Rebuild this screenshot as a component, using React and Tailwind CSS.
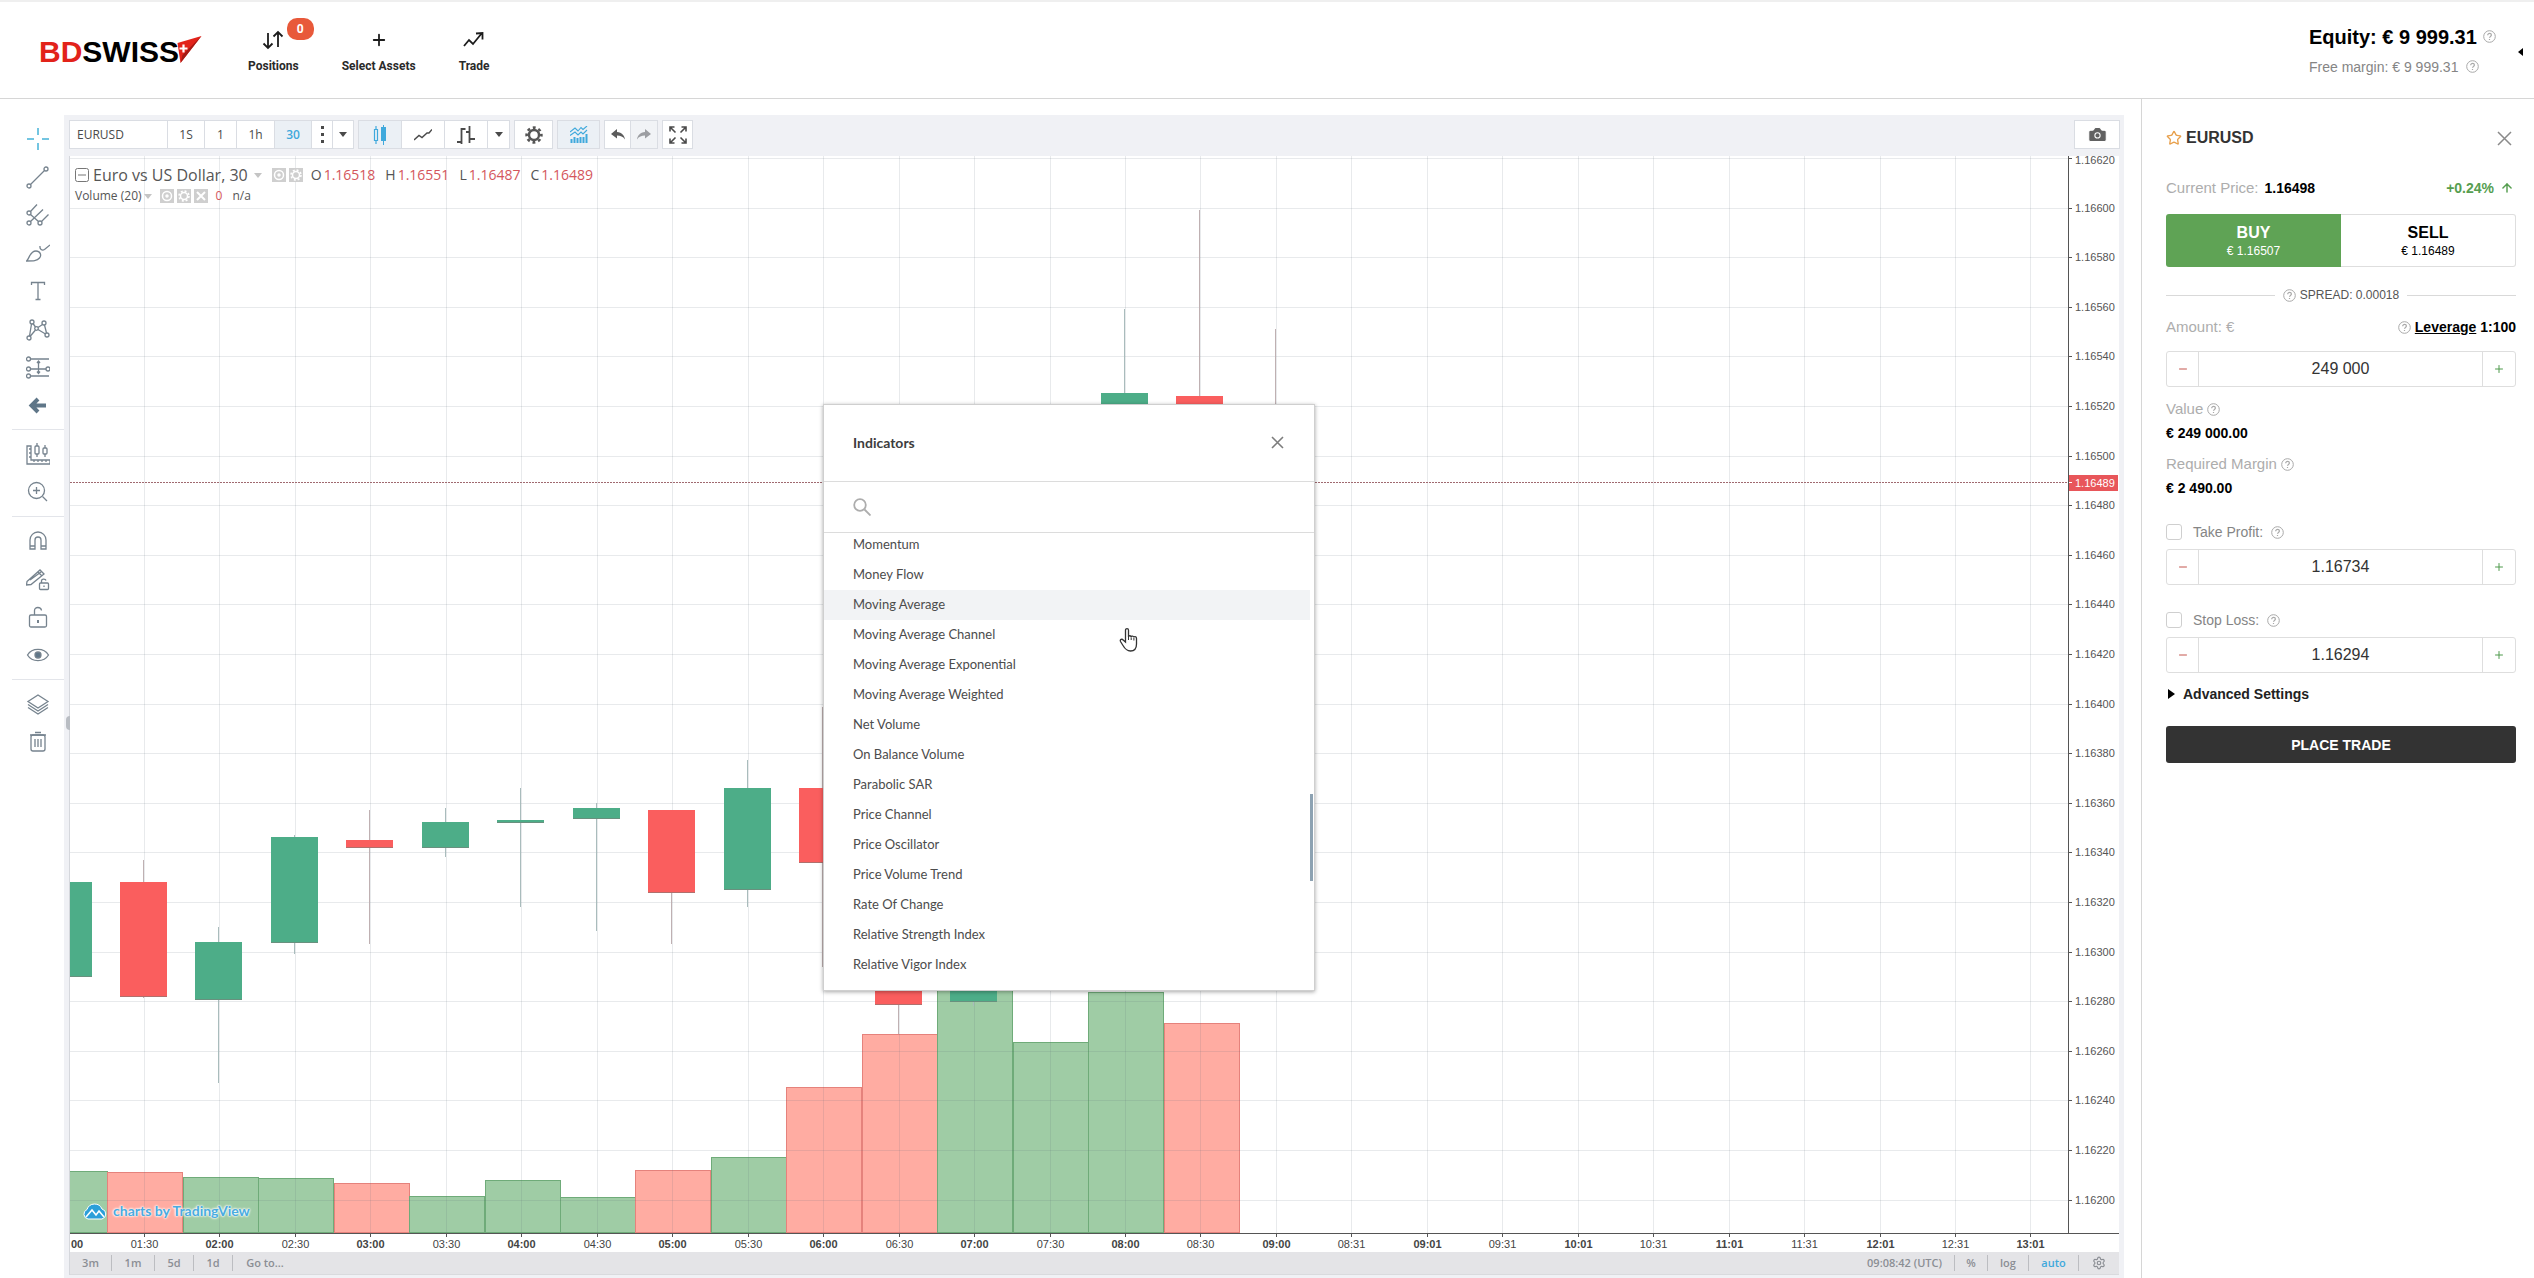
import React from 'react';
import { Plus, Minus, Star, Camera, Settings, ArrowUp } from 'lucide-react';
import clsx from 'clsx';

const STEP = 75.46;
const FIRST_X = 74;
const TOP_PRICE = 1.1662;
const PX_PER_TICK = 49.6;

const xAt = (i) => Math.round(FIRST_X + i * STEP) + 0.5;
const yAt = (price) => Math.round(2 + ((TOP_PRICE - price) / 0.0002) * PX_PER_TICK) + 0.5;

const TIMES = [
  '00', '01:30', '02:00', '02:30', '03:00', '03:30', '04:00', '04:30', '05:00',
  '05:30', '06:00', '06:30', '07:00', '07:30', '08:00', '08:30', '09:00', '08:31',
  '09:01', '09:31', '10:01', '10:31', '11:01', '11:31', '12:01', '12:31', '13:01',
];

const PRICES = Array.from({ length: 22 }, (_, i) => TOP_PRICE - i * 0.0002);

// i: slot, then body top/bottom and wick top/bottom in plot pixels
const CANDLES = [
  { i: -1, up: true, top: 726, bottom: 821, high: 726, low: 821 },
  { i: 0, up: false, top: 726, bottom: 841, high: 704, low: 842 },
  { i: 1, up: true, top: 786, bottom: 844, high: 771, low: 927 },
  { i: 2, up: true, top: 681, bottom: 787, high: 679, low: 798 },
  { i: 3, up: false, top: 684, bottom: 692, high: 654, low: 788 },
  { i: 4, up: true, top: 666, bottom: 692, high: 652, low: 701 },
  { i: 5, up: true, top: 664, bottom: 667, high: 632, low: 751 },
  { i: 6, up: true, top: 652, bottom: 663, high: 647, low: 775 },
  { i: 7, up: false, top: 654, bottom: 737, high: 654, low: 788 },
  { i: 8, up: true, top: 632, bottom: 734, high: 604, low: 751 },
  { i: 9, up: false, top: 632, bottom: 707, high: 551, low: 811 },
  { i: 10, up: false, top: 740, bottom: 849, high: 720, low: 878 },
  { i: 11, up: true, top: 560, bottom: 846, high: 540, low: 850 },
  { i: 13, up: true, top: 237, bottom: 420, high: 153, low: 440 },
  { i: 14, up: false, top: 240, bottom: 330, high: 54, low: 380 },
  { i: 15, up: false, top: 300, bottom: 327, high: 173, low: 340 },
];

const VOLUMES = [
  [-1, 1015, true], [0, 1016, false], [1, 1021, true], [2, 1022, true], [3, 1027, false],
  [4, 1040, true], [5, 1024, true], [6, 1041, true], [7, 1014, false], [8, 1001, true],
  [9, 931, false], [10, 878, false], [11, 832, true], [12, 886, true], [13, 836, true],
  [14, 867, false],
];

const INDICATORS = [
  'Momentum', 'Money Flow', 'Moving Average', 'Moving Average Channel',
  'Moving Average Exponential', 'Moving Average Weighted', 'Net Volume', 'On Balance Volume',
  'Parabolic SAR', 'Price Channel', 'Price Oscillator', 'Price Volume Trend',
  'Rate Of Change', 'Relative Strength Index', 'Relative Vigor Index',
];

function Caret({ className }) {
  return (
    <svg className={className} width="8" height="5" viewBox="0 0 8 5" aria-hidden="true">
      <path d="M0 0h8L4 5z" fill="currentColor" />
    </svg>
  );
}

function Gear({ size, className }) {
  return (
    <svg className={className} width={size} height={size} viewBox="0 0 18 18" fill="none" stroke="currentColor" aria-hidden="true">
      <circle cx="9" cy="9" r="5" strokeWidth="2.4" />
      <circle cx="9" cy="9" r="7.4" strokeWidth="2.6" strokeDasharray="2.9 2.911" strokeDashoffset="1.45" />
    </svg>
  );
}

function Help() {
  return (
    <svg className="shrink-0 text-[#a9a9a9]" width="13" height="13" viewBox="0 0 13 13" fill="none" stroke="currentColor" aria-hidden="true">
      <circle cx="6.5" cy="6.5" r="5.8" />
      <path d="M4.700 5.200c0-2.400 3.700-2.300 3.700-.1 0 1.300-1.900 1.300-1.900 2.700M6.500 8.900v1" strokeWidth="1.200" />
    </svg>
  );
}

function Logo() {
  return (
    <a href="#home" className="flex items-center text-[30px] leading-none font-bold text-black" aria-label="BDSwiss">
      <span className="text-[#e2231a]">BD</span>
      <span>SWISS</span>
      <svg className="-mt-1 -ml-1" width="27" height="28" viewBox="0 0 26 28" aria-hidden="true">
        <path d="M2 7 26 0 5 27z" fill="#e2231a" />
        <path d="M26 0 5 27l2-8z" fill="#a31a14" />
        <path d="M8 8.500v8M4 12.500h8" stroke="#fff" strokeWidth="2.200" />
      </svg>
    </a>
  );
}

function NavItem({ label, badge, children }) {
  return (
    <button type="button" className="relative flex flex-col items-center gap-2 font-[Roboto,sans-serif] text-[12px] leading-4 font-bold text-[#2a2a2a]">
      <span className="flex h-5 items-center">{children}</span>
      {label}
      {badge && (
        <span className="absolute -top-3 right-[-15px] flex h-[22px] w-[27px] items-center justify-center rounded-[10px] bg-[#e8593a] text-[12px] font-bold text-white">
          {badge}
        </span>
      )}
    </button>
  );
}

function Header() {
  return (
    <header className="flex h-[99px] items-center border-t-2 border-b border-t-[#efefef] border-b-[#d6d6d6] pt-[3px] pl-[39px]">
      <Logo />
      <nav className="ml-[46px] flex items-center gap-[43px]">
        <NavItem label="Positions" badge="0">
          <svg width="22" height="20" viewBox="0 0 22 20" fill="none" stroke="#1c1c1c" strokeWidth="1.800" aria-hidden="true">
            <path d="M6 3v15M1.500 13.500 6 18l4.500-4.500M16 17V2M11.500 6.500 16 2l4.500 4.500" />
          </svg>
        </NavItem>
        <NavItem label="Select Assets">
          <Plus size={18} color="#1c1c1c" strokeWidth={2.4} />
        </NavItem>
        <NavItem label="Trade">
          <svg width="22" height="18" viewBox="0 0 22 18" fill="none" stroke="#1c1c1c" strokeWidth="1.800" aria-hidden="true">
            <path d="m1 15 5-6 4 4 9-11M13 2.500 19.500 2v6.500" />
          </svg>
        </NavItem>
      </nav>
      <div className="ml-auto flex items-center">
        <div className="w-[209px]">
          <p className="flex items-center gap-1.5 text-xl leading-6 font-bold text-black">
            Equity: € 9 999.31 <Help />
          </p>
          <p className="mt-1.5 flex items-center gap-2 text-sm leading-6 text-[#858585]">
            Free margin: € 9 999.31 <Help />
          </p>
        </div>
        <button type="button" aria-label="Collapse account" className="w-4">
          <svg width="5" height="8" viewBox="0 0 5 8" aria-hidden="true"><path d="M5 0v8L0 4z" /></svg>
        </button>
      </div>
    </header>
  );
}

const DRAW_TOOLS = [
  [
    ['Crosshair', <path key="a" d="M12 1v7M12 16v7M1 12h7M16 12h7" stroke="#45b3d8" strokeWidth="1.500" />],
    ['Trend line', <g key="a"><circle cx="3" cy="21" r="2" /><circle cx="20" cy="4" r="2" /><path d="M4.500 19.500 18.500 5.500" /></g>],
    ['Pitchfork', <g key="a"><circle cx="3" cy="10" r="2" /><circle cx="3" cy="20" r="2" /><circle cx="14" cy="20" r="2" /><path d="m4.500 8.500 6.500-7M4.500 18.500 17 6.500M15.500 18.500l7-7M4.500 11.500l8 7" /></g>],
    ['Brush', <g key="a"><path d="M0.500 20c3-2 3-10 9.500-10 4 0 6 4 3.500 7s-6 3-13 3z" /><path d="M14 5c-.5 3 2 5 4.500 3.500L24 4" /></g>],
    ['Text', <path key="a" d="M5.500 6V3.500h13V6M12 3.500v17M9.500 20.500h5" />],
    ['Pattern', <g key="a"><circle cx="6" cy="5" r="2" /><circle cx="18" cy="6" r="2" /><circle cx="3" cy="21" r="2" /><circle cx="21" cy="18" r="2" /><circle cx="10.500" cy="11.500" r="1.800" /><path d="m5.500 7-2 12M7 6.500l2.500 3.500M12 10.500l4.500-3M18.500 8l2 8M9.500 13l-5.500 6.500M12 12.500l7.500 4.500" /></g>],
    ['Forecast', <g key="a"><circle cx="2.500" cy="4" r="2" /><circle cx="2.500" cy="14" r="2" /><circle cx="22" cy="14" r="2" /><circle cx="2.500" cy="21" r="2" /><path d="M4.500 4H23M4.500 14H20M4.500 21H23M12.500 6.500v11M11 8l1.500-2L14 8M11 16.500l1.500 2 1.500-2" /></g>],
    ['Back', <path key="a" d="m12 6-6.500 6.500L12 19M6 12.500h14" stroke="#5f7688" strokeWidth="4" />],
  ],
  [
    ['Measure', <g key="a"><path d="M1 4h4v14h19v4H1zM3 7h2M3 11h2M3 15h2M8 18v2M12 18v2M16 18v2M20 18v2M11 1v3M11 12v3M19 3v3M19 12v3" /><rect x="9" y="4" width="4" height="8" rx="1" /><rect x="17" y="6" width="4" height="6" rx="1" /></g>],
    ['Zoom in', <g key="a"><circle cx="10.500" cy="10.500" r="8" /><path d="m16.500 16.500 4.500 4.500M7 10.500h7M10.500 7v7" /></g>],
  ],
  [
    ['Magnet', <path key="a" d="M4 20v-9a8 8 0 0 1 16 0v9h-5v-9a3 3 0 0 0-6 0v9zM4 17h5M15 17h5" />],
    ['Lock drawing', <g key="a"><path d="M1 14.500 14 3l4 4L5 17.500l-4.500.5zM4 13l11-8M12 5l4 4" /><rect x="13.500" y="16" width="9" height="6.500" rx="1" /><path d="M15.500 16v-2c0-2.500 4-2.500 4.500-.5M18 18.500v1.500" /></g>],
    ['Unlock', <g key="a"><rect x="3.500" y="10" width="17" height="12" rx="1.500" /><path d="M8.500 10V5.500c0-4 6.500-4 7 0" /><path d="M12 15v3" strokeWidth="2" /></g>],
    ['Show drawings', <g key="a"><path d="M1.500 12C6 4.500 18 4.500 22.500 12 18 19.500 6 19.500 1.500 12z" /><circle cx="12" cy="12" r="3" fill="#5f7688" /></g>],
  ],
  [
    ['Layers', <path key="a" d="m12 3 10 6.500L12 16 2 9.500zM2 12.500 12 19l10-6.500M2 15.500 12 22l10-6.500" />],
    ['Delete', <g key="a"><rect x="5" y="5" width="14" height="16" rx="2" /><path d="M4 5h16M9 2.500h6M9 9v8M12 9v8M15 9v8" /></g>],
  ],
];

function DrawingToolbar() {
  return (
    <aside className="w-16 shrink-0 pt-[21px] pl-3">
      {DRAW_TOOLS.map((group, g) => (
        <div key={g} className={clsx('flex flex-col', g > 0 && 'mt-[5px] border-t border-[#e3e5ea] pt-[5px]')}>
          {group.map(([name, art]) => (
            <button key={name} type="button" aria-label={name} className="flex h-[38px] items-center justify-center">
              <svg width="24" height="24" viewBox="0 0 24 24" fill="none" stroke="#76838e" strokeWidth="1.300" aria-hidden="true">{art}</svg>
            </button>
          ))}
        </div>
      ))}
    </aside>
  );
}

function ToolButton({ label, className, active, children }) {
  return (
    <button
      type="button"
      aria-label={label}
      className={clsx('flex h-full items-center justify-center', active ? 'bg-[#ebf0f5] text-[#3fa9dc]' : 'text-[#4a4a4a]', className)}
    >
      {children}
    </button>
  );
}

function ToolGroup({ children }) {
  return <div className="flex h-[29px] divide-x divide-[#dadde3] border border-[#dadde3] bg-white">{children}</div>;
}

function ChartToolbar() {
  return (
    <div className="flex gap-1 pb-[7px] font-[Open_Sans,sans-serif] text-[12px] text-[#4a4a4a]">
      <ToolGroup>
        <input aria-label="Symbol" defaultValue="EURUSD" className="w-[98px] px-[7px] text-[12px] text-[#4a4a4a]" />
        <ToolButton className="w-[37px]">1S</ToolButton>
        <ToolButton className="w-8">1</ToolButton>
        <ToolButton className="w-[38px]">1h</ToolButton>
        <ToolButton className="w-[37px] font-semibold" active>30</ToolButton>
        <ToolButton label="More intervals" className="w-[21px]">
          <svg width="3" height="17" viewBox="0 0 3 17" fill="currentColor" aria-hidden="true">
            <path d="M0 0h3v3H0zM0 7h3v3H0zM0 14h3v3H0z" />
          </svg>
        </ToolButton>
        <ToolButton label="Interval menu" className="w-5"><Caret /></ToolButton>
      </ToolGroup>
      <ToolGroup>
        <ToolButton label="Candles" className="w-[43px]" active>
          <svg width="14" height="20" viewBox="0 0 14 20" aria-hidden="true">
            <path d="M1.500 4.500h3v11h-3zM3 1v3M3 16v3" fill="none" stroke="currentColor" strokeWidth="1.200" />
            <path d="M8 2h5v14H8zM10 0h1v20h-1z" fill="currentColor" />
          </svg>
        </ToolButton>
        <ToolButton label="Line" className="w-[43px]">
          <svg width="18" height="12" viewBox="0 0 18 12" fill="none" stroke="currentColor" strokeWidth="1.400" aria-hidden="true">
            <path d="m0 11 5-4.500 3 2L13 4h2l3-3.500" />
          </svg>
        </ToolButton>
        <ToolButton label="Bars" className="w-[43px]">
          <svg width="18" height="18" viewBox="0 0 18 18" fill="none" stroke="currentColor" strokeWidth="1.800" aria-hidden="true">
            <path d="M4.500 2v16M4.500 3h4M0 16h4.500M12.500 0v17M9 6h3.500M12.500 13H18" />
          </svg>
        </ToolButton>
        <ToolButton label="Style menu" className="w-[21px]"><Caret /></ToolButton>
      </ToolGroup>
      <ToolGroup>
        <ToolButton label="Settings" className="w-[37px]"><Gear size={18} className="text-[#555]" /></ToolButton>
      </ToolGroup>
      <ToolGroup>
        <ToolButton label="Indicators" className="w-[41px]" active>
          <svg width="18" height="17" viewBox="0 0 18 17" fill="none" stroke="currentColor" strokeWidth="1.100" aria-hidden="true">
            <path d="m0 6 5-4 3 3 3-3.500 2 2L17 0M0 9.500 5 6l3 3 3-3 2 2 4-4" />
            <path d="M1.500 17v-4M4.500 17v-6M7.500 17v-5M10.500 17v-6M13.500 17v-6M16.500 17V8" strokeWidth="2" />
          </svg>
        </ToolButton>
      </ToolGroup>
      <ToolGroup>
        <ToolButton label="Undo" className="w-[26px]">
          <svg width="14" height="11" viewBox="0 0 14 11" fill="#5c5c5c" aria-hidden="true"><path d="M6 0 0 5l6 4.500V6.500c3.500 0 6 1 8 4-.5-4-3-7-8-7.500z" /></svg>
        </ToolButton>
        <ToolButton label="Redo" className="w-[26px] bg-[#f1f3f6]">
          <svg width="14" height="11" viewBox="0 0 14 11" fill="#9c9ea2" aria-hidden="true"><path d="m8 0 6 5-6 4.500V6.500c-3.500 0-6 1-8 4 .5-4 3-7 8-7.500z" /></svg>
        </ToolButton>
      </ToolGroup>
      <ToolGroup>
        <ToolButton label="Fullscreen" className="w-[29px]">
          <svg width="18" height="18" viewBox="0 0 18 18" fill="none" stroke="currentColor" strokeWidth="1.600" aria-hidden="true">
            <path d="M1 5.500V1h4.500M1 1l5.500 5.500M12.500 1H17v4.500M17 1l-5.500 5.500M1 12.500V17h4.500M1 17l5.500-5.500M17 12.500V17h-4.500M17 17l-5.500-5.500" />
          </svg>
        </ToolButton>
      </ToolGroup>
      <div className="mr-px ml-auto">
        <ToolGroup>
          <ToolButton label="Snapshot" className="w-11"><Camera size={21} fill="#616161" stroke="#fff" strokeWidth={1.2} /></ToolButton>
        </ToolGroup>
      </div>
    </div>
  );
}

function LegendBox({ kind }) {
  return (
    <svg width="14" height="14" viewBox="0 0 14 14" fill="none" stroke="#fff" strokeWidth="1.500" aria-hidden="true">
      <rect width="14" height="14" fill="#cfcfcf" stroke="none" />
      {kind === 'close' ? <path d="m3 3 8 8M11 3l-8 8" strokeWidth="2" /> : <circle cx="7" cy="7" r={kind === 'eye' ? 4.5 : 3.5} />}
      {kind === 'eye' && <circle cx="7" cy="7" r="1" />}
      {kind === 'gear' && <circle cx="7" cy="7" r="5" strokeDasharray="2 1.927" />}
    </svg>
  );
}

function Legend() {
  const ohlc = [['O', '1.16518'], ['H', '1.16551'], ['L', '1.16487'], ['C', '1.16489']];
  return (
    <div className="absolute top-2 left-[5px] font-[Open_Sans,sans-serif] text-[#555]">
      <div className="flex h-[22px] items-center">
        <svg width="14" height="14" viewBox="0 0 14 14" fill="none" stroke="#777" aria-hidden="true">
          <rect x=".5" y=".5" width="13" height="13" rx="2" />
          <path d="M3 7h8" />
        </svg>
        <span className="ml-1 text-[16px] leading-5">Euro vs US Dollar, 30</span>
        <Caret className="ml-1.5 text-[#c4c4c4]" />
        <span className="mr-2 ml-2.5 flex gap-[3px]"><LegendBox kind="eye" /><LegendBox kind="gear" /></span>
        <span className="flex gap-2.5 text-[14px] leading-5">
          {ohlc.map(([k, v]) => (
            <span key={k} className="flex gap-0.5">{k}<span className="text-[#d4565c]">{v}</span></span>
          ))}
        </span>
      </div>
      <div className="flex h-5 items-center text-[12px]">
        Volume (20)
        <Caret className="ml-0.5 text-[#c4c4c4]" />
        <span className="mr-2 ml-2 flex gap-[3px]"><LegendBox kind="eye" /><LegendBox kind="gear" /><LegendBox kind="close" /></span>
        <span className="text-[#d4565c]">0</span>
        <span className="ml-2.5">n/a</span>
      </div>
    </div>
  );
}

function Plot() {
  return (
    <svg className="absolute inset-0 h-full w-full" role="img" aria-label="EURUSD 30 minute candles">
      {VOLUMES.map(([i, top, up]) => (
        <rect
          key={i}
          x={Math.round(FIRST_X + (i - 0.5) * STEP) + 1.5}
          y={top + 0.5}
          width={75}
          height={1076 - top}
          fill={up ? '#9fcca5' : '#ffaca2'}
          stroke={up ? '#6fab79' : '#e5827c'}
        />
      ))}
      <g stroke="#5a6a78" strokeOpacity=".14">
        {PRICES.map((p) => <line key={p} x1="0" x2="100%" y1={yAt(p)} y2={yAt(p)} />)}
        {TIMES.map((t, n) => n > 0 && <line key={t} x1={xAt(n - 1)} x2={xAt(n - 1)} y1="0" y2="100%" />)}
      </g>
      {CANDLES.map((c) => (
        <g key={c.i}>
          <line x1={xAt(c.i) - 1} x2={xAt(c.i) - 1} y1={c.high} y2={c.low} stroke={c.up ? '#a9bcbc' : '#bfb0b2'} />
          <rect x={xAt(c.i) - 24.5} y={c.top} width="47" height={c.bottom - c.top} fill={c.up ? '#4dad88' : '#fa5e5e'} />
          <path d={`M${xAt(c.i) - 24.5} ${c.bottom - 0.5}h47`} stroke="#7d7d78" strokeOpacity=".6" />
        </g>
      ))}
      <line x1="0" x2="100%" y1="326.500" y2="326.500" stroke="#a06a70" strokeDasharray="2 1" />
    </svg>
  );
}

function PriceAxis() {
  return (
    <svg className="h-full w-[51px] shrink-0 overflow-visible border-l border-[#555]" role="img" aria-label="Price axis">
      {PRICES.map((p) => (
        <g key={p}>
          <path d={`M0 ${yAt(p)}h3`} stroke="#555" />
          <text x="6" y={Math.max(yAt(p) + 3.5, 8)} fontSize="11" fill="#555">{p.toFixed(5)}</text>
        </g>
      ))}
      <rect y="319" width="49" height="16" fill="#e8565a" />
      <path d="M0 326.500h3" stroke="#fff" />
      <text x="6" y="330.500" fontSize="11" fill="#fff">1.16489</text>
    </svg>
  );
}

function TimeAxis() {
  return (
    <svg className="block h-[18px] w-full" role="img" aria-label="Time axis">
      {TIMES.map((t, n) => (
        <g key={t}>
          {n > 0 && <path d={`M${xAt(n - 1)} 0v3`} stroke="#555" />}
          <text
            x={n === 0 ? 1 : xAt(n - 1)}
            y="14"
            fontSize="11"
            fill="#444"
            textAnchor={n === 0 ? 'start' : 'middle'}
            fontWeight={n % 2 === 0 ? 700 : 400}
          >
            {t}
          </text>
        </g>
      ))}
    </svg>
  );
}

function Watermark() {
  return (
    <a href="#tradingview" className="absolute bottom-3 left-[13px] flex items-center gap-1.5 font-[Lato,sans-serif] text-[14px] leading-5 font-bold text-[#4aabe0] [text-shadow:0_0_2px_#fff,0_0_2px_#fff,0_0_3px_#fff]">
      <svg width="24" height="17" viewBox="0 0 24 17" aria-hidden="true">
        <path d="M5 16a5 5 0 0 1-1-9.500A8 8 0 0 1 19 6a5.200 5.200 0 0 1 0 10z" fill="#2c9fd9" stroke="#fff" />
        <path d="m3 14 6-7 4 5 3-4 5 6" fill="none" stroke="#fff" strokeWidth="1.600" />
      </svg>
      charts by TradingView
    </a>
  );
}

function IndicatorsDialog() {
  return (
    <section role="dialog" aria-labelledby="indicators-title" className="absolute top-[248px] left-1/2 flex h-[587px] w-[492px] -translate-x-1/2 flex-col border border-[#cfcfcf] bg-white font-[Lato,sans-serif] shadow-[0_1px_4px_rgba(0,0,0,0.35)]">
      <div className="flex h-[77px] shrink-0 items-center justify-between border-b border-[#dcdcdc] pr-[30px] pb-px pl-[29px]">
        <h2 id="indicators-title" className="text-[14px] font-bold text-[#3d3d3d]">Indicators</h2>
        <button type="button" aria-label="Close indicators" className="text-[#7d7d7d]">
          <svg width="13" height="13" viewBox="0 0 13 13" stroke="currentColor" strokeWidth="1.600" aria-hidden="true"><path d="m1 1 11 11M12 1 1 12" /></svg>
        </button>
      </div>
      <label className="flex h-[51px] shrink-0 items-center border-b border-[#dcdcdc] pl-[29px]">
        <svg width="18" height="18" viewBox="0 0 18 18" fill="none" stroke="#adadad" strokeWidth="1.800" aria-hidden="true">
          <circle cx="7" cy="7" r="5.800" />
          <path d="m11.500 11.500 6 6" />
        </svg>
        <input type="search" aria-label="Search indicators" className="ml-3 flex-1 outline-none" />
      </label>
      <ul className="-mt-[3px] pr-1">
        {INDICATORS.map((name) => (
          <li key={name} className={clsx('h-[30px]', name === 'Moving Average' && 'bg-[#f2f3f5]')}>
            <button type="button" className="h-full w-full pl-[29px] text-left text-[13px] text-[#4c4c4c]">{name}</button>
          </li>
        ))}
      </ul>
      <span className="absolute top-[389px] right-px h-[87px] w-[3px] bg-[#8da2b2]" />
      <svg className="absolute top-[222px] left-[293px]" width="24" height="26" viewBox="0 0 24 26" aria-hidden="true">
        <path
          d="M8.500 15V3.200c0-2.200 3-2.200 3 0V10c0-1.800 2.700-1.600 2.700.2 0-1.600 2.700-1.400 2.700.4 0-1.500 2.600-1.200 2.600.8V17c0 4-2 7-6 7-4 0-5.500-2-7.500-5.500L3.500 14.500c-1-2 1.500-3 2.700-1.500z"
          fill="#fff"
          stroke="#333"
          strokeWidth="1.300"
        />
        <path d="M11.500 10v3M14.200 10.500V13M16.900 11v2.500" stroke="#333" />
      </svg>
    </section>
  );
}

function BottomBar() {
  return (
    <div className="flex h-[23px] items-center border-b border-[#d9dadd] bg-[#e4e4e7] font-[Open_Sans,sans-serif] text-[11px] leading-4 font-semibold text-[#8b8e94]">
      <div className="flex divide-x divide-[#bcbdc1]">
        <button type="button" className="w-[42px]">3m</button>
        <button type="button" className="w-[43px]">1m</button>
        <button type="button" className="w-[39px]">5d</button>
        <button type="button" className="w-[39px]">1d</button>
        <button type="button" className="w-16">Go to...</button>
      </div>
      <div className="ml-auto flex divide-x divide-[#bcbdc1]">
        <span className="pr-3">09:08:42 (UTC)</span>
        <button type="button" className="w-[33px]">%</button>
        <button type="button" className="w-[41px]">log</button>
        <button type="button" className="w-[50px] text-[#3fa9dc]">auto</button>
        <button type="button" aria-label="Axis settings" className="flex w-10 items-center justify-center"><Settings size={14} /></button>
      </div>
    </div>
  );
}

function ChartFrame() {
  return (
    <section className="mt-4 flex min-w-0 flex-1 flex-col bg-[#f0f1f5] pt-[5px] pr-[3px] pb-[3px] pl-[5px]">
      <ChartToolbar />
      <div className="relative mr-0.5 flex flex-1 flex-col border-l border-[#d5d7dc] bg-white">
        <button type="button" aria-label="Toggle drawing toolbar" className="absolute top-1/2 -left-1 h-3.5 w-1 rounded-l-full bg-[#b9bdc3]" />
        <div className="flex flex-1">
          <div className="relative flex-1">
            <Plot />
            <Legend />
            <Watermark />
            <IndicatorsDialog />
          </div>
          <PriceAxis />
        </div>
        <div className="border-t border-[#555]"><TimeAxis /></div>
        <BottomBar />
      </div>
    </section>
  );
}

function Stepper({ label, value }) {
  return (
    <div className="flex h-9 divide-x divide-[#dedede] rounded-[3px] border border-[#dedede]">
      <button type="button" aria-label={`Decrease ${label}`} className="flex w-8 items-center justify-center"><Minus size={12} color="#c4574f" /></button>
      <input aria-label={label} defaultValue={value} className="min-w-0 flex-1 text-center text-base text-[#333] outline-none" />
      <button type="button" aria-label={`Increase ${label}`} className="flex w-8 items-center justify-center"><Plus size={12} color="#4f9a4c" /></button>
    </div>
  );
}

function LimitField({ id, label, value }) {
  return (
    <div className="pb-[35px]">
      <div className="flex h-[34px] items-center">
        <input id={id} type="checkbox" className="size-4 appearance-none rounded-[3px] border border-[#cfcfcf] bg-white" />
        <label htmlFor={id} className="mr-2 ml-[11px] text-sm text-[#858585]">{label}:</label>
        <Help />
      </div>
      <Stepper label={label} value={value} />
    </div>
  );
}

function TradePanel() {
  return (
    <aside className="w-[393px] shrink-0 border-l border-[#d6d6d6] pr-[18px] pl-6">
      <div className="mt-[25px] flex h-7 items-center">
        <Star size={16} color="#e8a04c" strokeWidth={2} />
        <h1 className="ml-1 text-base font-bold text-[#333]">EURUSD</h1>
        <button type="button" aria-label="Close panel" className="mr-1 ml-auto">
          <svg width="15" height="15" viewBox="0 0 15 15" stroke="#8a8a8a" strokeWidth="1.500" aria-hidden="true"><path d="m1 1 13 13M14 1 1 14" /></svg>
        </button>
      </div>

      <div className="mt-6 flex h-6 items-center text-sm font-bold">
        <span className="text-[15px] font-normal text-[#adadad]">Current Price:</span>
        <span className="ml-1.5 text-black">1.16498</span>
        <span className="mr-0.5 ml-auto flex items-center gap-1.5 text-[#569e50]">
          +0.24% <ArrowUp size={14} strokeWidth={2.5} />
        </span>
      </div>

      <div className="mt-3.5 grid h-[53px] grid-cols-2">
        <button type="button" className="flex flex-col items-center justify-center rounded-l-[3px] bg-[#5fa355] text-white">
          <span className="text-base leading-5 font-bold">BUY</span>
          <span className="text-[12px] leading-4">€ 1.16507</span>
        </button>
        <button type="button" className="flex flex-col items-center justify-center rounded-r-[3px] border border-l-0 border-[#dedede] text-black">
          <span className="text-base leading-5 font-bold">SELL</span>
          <span className="text-[12px] leading-4">€ 1.16489</span>
        </button>
      </div>

      <div className="mt-5 flex h-4 items-center text-[12px] text-[#555]">
        <span className="h-px flex-1 bg-[#d9d9d9]" />
        <span className="flex items-center gap-1 px-2"><Help />SPREAD: 0.00018</span>
        <span className="h-px flex-1 bg-[#d9d9d9]" />
      </div>

      <div className="mt-3 mb-3 flex h-6 items-center text-[15px] text-[#adadad]">
        Amount: €
        <span className="ml-auto flex items-center gap-1 text-sm font-bold text-black">
          <Help />
          <span><a href="#leverage" className="underline">Leverage</a> 1:100</span>
        </span>
      </div>
      <Stepper label="Amount" value="249 000" />

      <dl className="mt-2.5">
        <dt className="flex h-6 items-center gap-1 text-[15px] text-[#adadad]">Value <Help /></dt>
        <dd className="h-[31px] text-sm leading-6 font-bold text-black">€ 249 000.00</dd>
        <dt className="flex h-6 items-center gap-1 text-[15px] text-[#adadad]">Required Margin <Help /></dt>
        <dd className="h-[39px] text-sm leading-6 font-bold text-black">€ 2 490.00</dd>
      </dl>

      <LimitField id="take-profit" label="Take Profit" value="1.16734" />
      <div className="-mt-[17px]">
        <LimitField id="stop-loss" label="Stop Loss" value="1.16294" />
      </div>

      <button type="button" className="-mt-6 flex h-5 items-center gap-2 pl-0.5 text-sm font-bold text-[#222]">
        <svg width="7" height="10" viewBox="0 0 7 10" aria-hidden="true"><path d="M0 0v10l7-5z" /></svg>
        Advanced Settings
      </button>
      <button type="button" className="mt-[22px] h-[37px] w-full rounded-[3px] bg-[#333] text-sm font-bold text-white">PLACE TRADE</button>
    </aside>
  );
}

export default function App() {
  return (
    <div className="flex min-h-screen flex-col bg-white font-['Liberation_Sans',Arial,sans-serif]">
      <Header />
      <main className="flex flex-1">
        <DrawingToolbar />
        <ChartFrame />
        <div className="w-[17px] shrink-0" />
        <TradePanel />
      </main>
    </div>
  );
}
